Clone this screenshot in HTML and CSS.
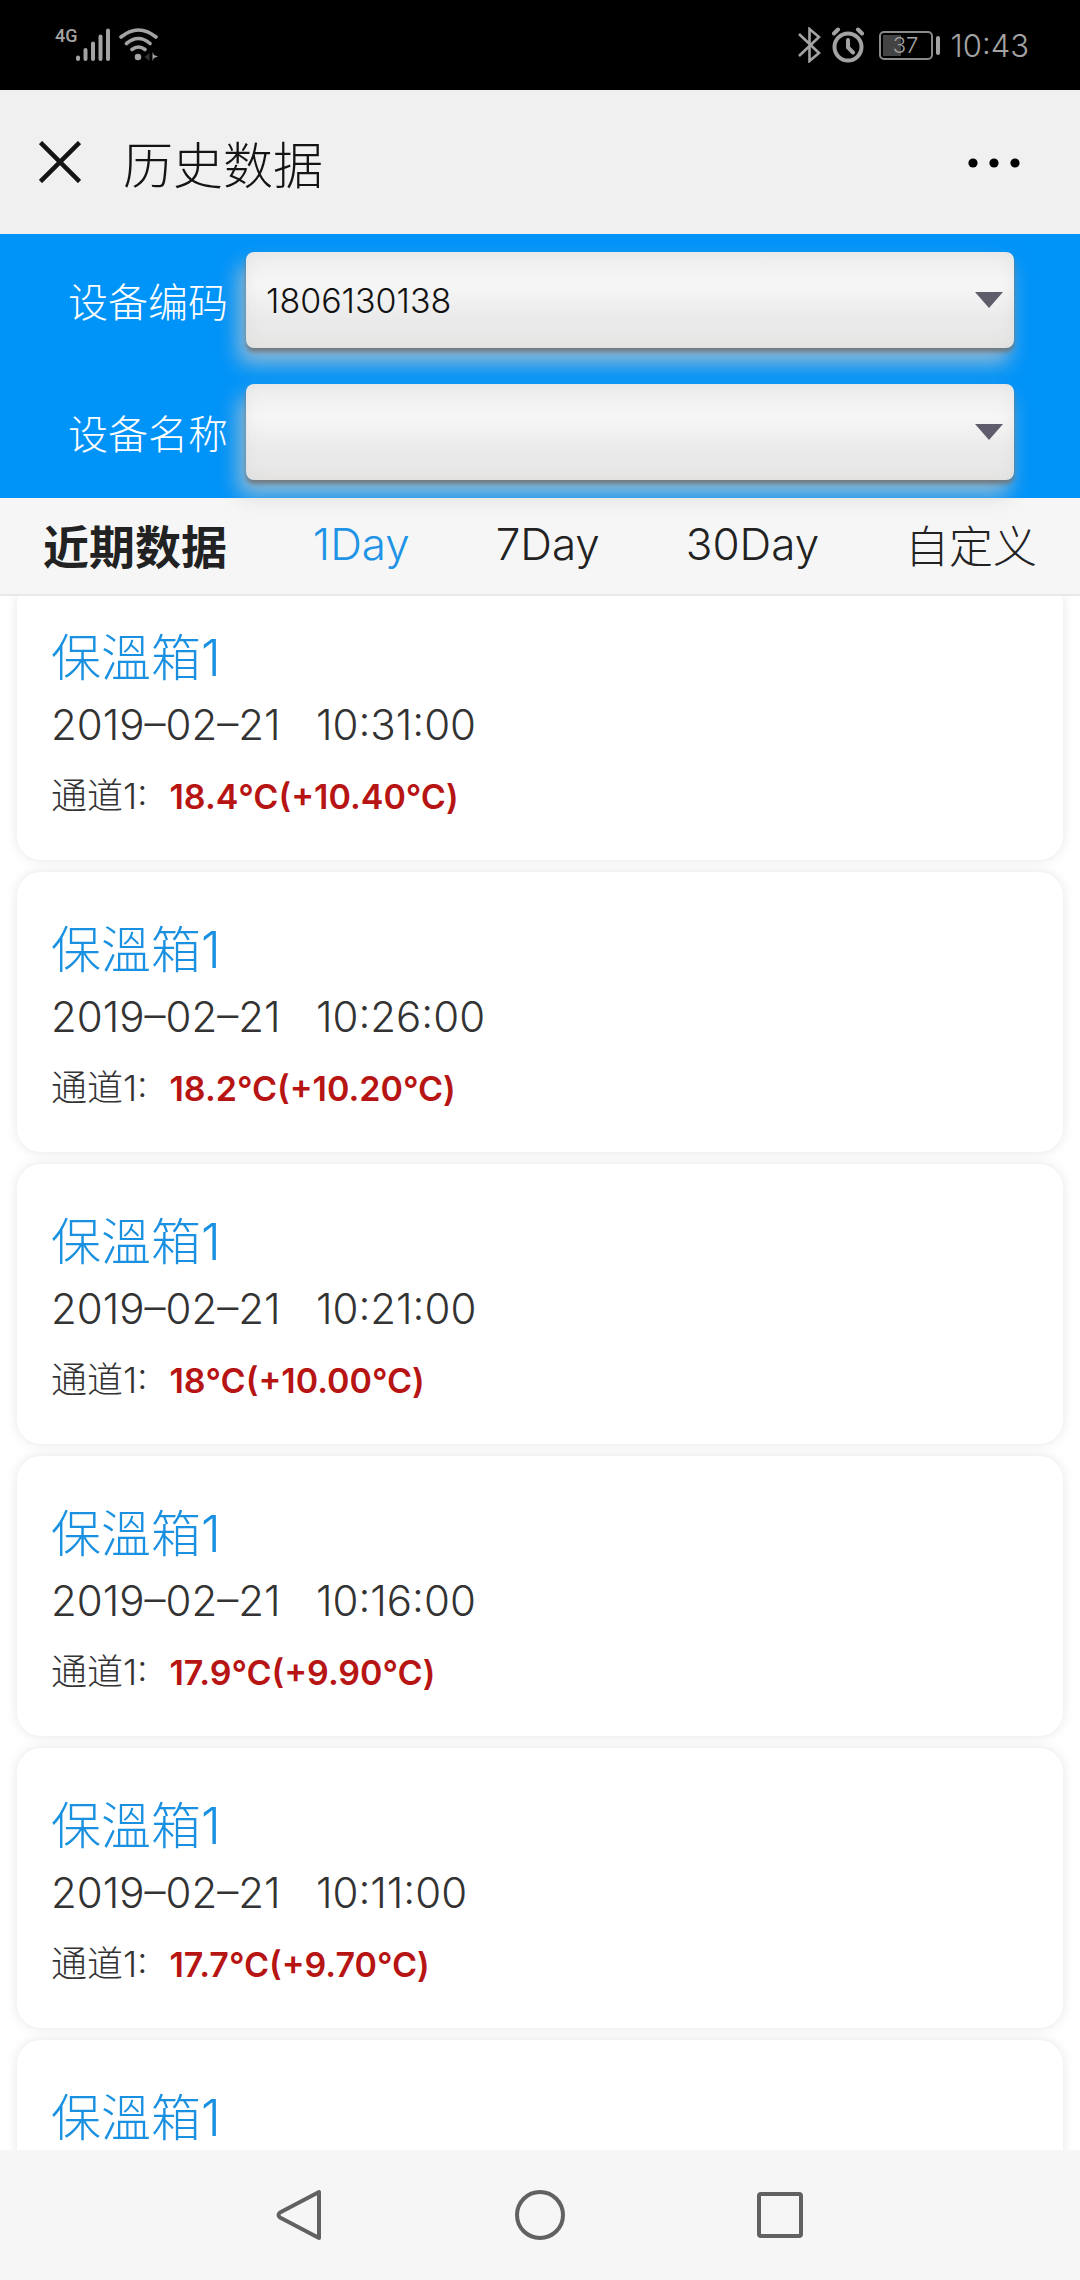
FILE: index.html
```html
<!DOCTYPE html>
<html lang="zh-CN">
<head>
    <meta charset="UTF-8">
    <meta name="viewport" content="width=device-width, initial-scale=1.0">
    <title>历史数据</title>
    <link rel="stylesheet" href="styles.css">
</head>
<body>
    <!-- 状态栏 -->
    <div class="status-bar">
        <div class="status-left">
            <span class="network">4G</span>
            <svg class="signal" width="36" height="34" viewBox="0 0 36 34" stroke="#a3a3a3" stroke-width="4" stroke-linecap="round">
                <path d="M3 29.500V31M10.500 22V31M18 15.500V31M25.500 8.500V31M33 2.500V31"/>
            </svg>
            <svg class="wifi" width="40" height="34" viewBox="0 0 40 34" fill="none" stroke="#a3a3a3" stroke-width="3.600" stroke-linecap="round">
                <path d="M2 9Q19.500 -5 37 9M7.500 15.500Q19.500 5.500 31 15.500M13 21.500Q19.500 16.500 26 21.500"/>
                <circle cx="19" cy="29" r="3.300" fill="#a3a3a3" stroke="none"/>
                <path d="M30.500 25v8l-5-4z" fill="#333" stroke="none"/>
                <path d="M33.500 24v9l1.500-3 4-1.500-4-1.500z" fill="#a3a3a3" stroke="none"/>
            </svg>
        </div>
        <div class="status-right">
            <svg width="24" height="36" viewBox="0 0 24 36" fill="none" stroke="#a3a3a3" stroke-width="2.600">
                <path d="M2 7L22 26L12.500 34V2L22 10L2 29"/>
            </svg>
            <svg width="34" height="36" viewBox="0 0 34 36" fill="none" stroke="#a3a3a3" stroke-width="4" stroke-linecap="round">
                <circle cx="17" cy="20" r="13.500"/>
                <path d="M17 13v7.500l5 5M3 6.500l4-4M27 2.500l4 4"/>
            </svg>
            <div class="battery"><span>37</span></div>
            <span class="clock">10:43</span>
        </div>
    </div>

    <!-- 标题栏 -->
    <header class="header">
        <button class="icon-button" type="button" aria-label="关闭">
            <svg width="42" height="42" viewBox="0 0 42 42" stroke="#141414" stroke-width="4.500">
                <path d="M1.500 1.500L40.500 40.500M40.500 1.500L1.500 40.500"/>
            </svg>
        </button>
        <h1>历史数据</h1>
        <button class="icon-button" type="button" aria-label="更多">
            <svg width="54" height="42" viewBox="0 0 54 42">
                <circle cx="6" cy="22" r="4.600"/>
                <circle cx="27" cy="22" r="4.600"/>
                <circle cx="48" cy="22" r="4.600"/>
            </svg>
        </button>
    </header>

    <!-- 设备选择 -->
    <form class="filter">
        <div class="field">
            <label for="deviceCode">设备编码</label>
            <select id="deviceCode">
                <option>1806130138</option>
            </select>
        </div>
        <div class="field">
            <label for="deviceName">设备名称</label>
            <select id="deviceName">
                <option></option>
            </select>
        </div>
    </form>

    <nav class="tabs">
        <strong>近期数据</strong>
        <button class="active" type="button">1Day</button>
        <button type="button">7Day</button>
        <button type="button">30Day</button>
        <button type="button">自定义</button>
    </nav>

    <!-- 数据列表 -->
    <main class="list">
        <section class="card">
            <h2>保溫箱1</h2>
            <p class="time">2019–02–21&nbsp;&nbsp; 10:31:00</p>
            <p class="channel">通道1: <b>18.4℃(+10.40℃)</b></p>
        </section>
        <section class="card">
            <h2>保溫箱1</h2>
            <p class="time">2019–02–21&nbsp;&nbsp; 10:26:00</p>
            <p class="channel">通道1: <b>18.2℃(+10.20℃)</b></p>
        </section>
        <section class="card">
            <h2>保溫箱1</h2>
            <p class="time">2019–02–21&nbsp;&nbsp; 10:21:00</p>
            <p class="channel">通道1: <b>18℃(+10.00℃)</b></p>
        </section>
        <section class="card">
            <h2>保溫箱1</h2>
            <p class="time">2019–02–21&nbsp;&nbsp; 10:16:00</p>
            <p class="channel">通道1: <b>17.9℃(+9.90℃)</b></p>
        </section>
        <section class="card">
            <h2>保溫箱1</h2>
            <p class="time">2019–02–21&nbsp;&nbsp; 10:11:00</p>
            <p class="channel">通道1: <b>17.7℃(+9.70℃)</b></p>
        </section>
        <section class="card">
            <h2>保溫箱1</h2>
        </section>
    </main>

    <!-- 系统导航键 -->
    <footer class="nav-keys">
        <button class="icon-button" type="button" aria-label="返回">
            <svg width="52" height="52" viewBox="0 0 52 52" fill="none" stroke="#616161" stroke-width="4" stroke-linejoin="round">
                <path d="M45 3V49L6 28.500Q3 26 6 23.500Z"/>
            </svg>
        </button>
        <button class="icon-button" type="button" aria-label="主页">
            <svg width="52" height="52" viewBox="0 0 52 52" fill="none" stroke="#616161" stroke-width="4">
                <circle cx="26" cy="26" r="23"/>
            </svg>
        </button>
        <button class="icon-button" type="button" aria-label="最近任务">
            <svg width="52" height="52" viewBox="0 0 52 52" fill="none" stroke="#616161" stroke-width="4">
                <rect x="5" y="5" width="42" height="42" rx="2"/>
            </svg>
        </button>
    </footer>
</body>
</html>
```
FILE: styles.css
```css
* {
    box-sizing: border-box;
}
body {
    font-family: Inter, "Noto Sans CJK SC", sans-serif;
    font-weight: 300;
    color: #222;
    background-color: #fff;
    margin: 0;
    height: 100vh;
    display: flex;
    flex-direction: column;
}
h1, h2, p {
    margin: 0;
    font-weight: 300;
}
button {
    font: inherit;
    color: inherit;
    background: none;
    border: none;
    padding: 0;
}
svg {
    display: block;
}

/* 状态栏 */
.status-bar {
    flex: none;
    height: 90px;
    padding: 0 51px 0 55px;
    background-color: #000;
    color: #a3a3a3;
    display: flex;
    align-items: center;
    justify-content: space-between;
}
.status-left, .status-right {
    display: flex;
    align-items: center;
}
.network {
    font-family: Roboto, sans-serif;
    font-size: 18px;
    font-weight: 500;
    line-height: 16px;
    align-self: flex-start;
}
.signal {
    margin-left: -3px;
}
.wifi {
    margin-left: 8px;
}
.status-right {
    gap: 10px;
}
.battery {
    width: 54px;
    height: 29px;
    margin: 0 8px 0 4px;
    border: 2px solid #8a8a8a;
    border-radius: 5px;
    background: linear-gradient(#444, #444) 2px 2px / 18px 21px no-repeat;
    font-size: 22px;
    line-height: 25px;
    text-align: center;
    position: relative;
}
.battery::after {
    content: "";
    position: absolute;
    top: 3px;
    right: -9px;
    width: 4px;
    height: 19px;
    border-radius: 2px;
    background-color: #a3a3a3;
}
.clock {
    font-size: 31px;
}

/* 标题栏 */
.header {
    flex: none;
    height: 144px;
    padding: 0 59px 0 39px;
    background-color: #f0f0f0;
    display: flex;
    align-items: center;
}
.header h1 {
    flex: 1;
    margin-left: 42px;
    padding-top: 8px;
    font-size: 50px;
    line-height: 72px;
    color: #141414;
}

/* 设备选择 */
.filter {
    flex: none;
    padding: 18px 66px 18px 68px;
    background-color: #0093f8;
    display: flex;
    flex-direction: column;
    gap: 36px;
    position: relative;
    z-index: 1;
}
.field {
    display: flex;
    align-items: center;
    gap: 18px;
}
.field label {
    font-size: 40px;
    color: #fff;
}
.field select {
    flex: 1;
    height: 96px;
    padding: 0 60px 0 20px;
    appearance: none;
    border: none;
    border-radius: 8px;
    font: inherit;
    font-size: 34px;
    color: #111;
    /* 下拉箭头 + 渐变 */
    background:
        url("data:image/svg+xml,%3Csvg xmlns='http://www.w3.org/2000/svg' viewBox='0 0 28 16'%3E%3Cpath d='M0 0h28L14 16z' fill='%235f5c6b'/%3E%3C/svg%3E") right 11px center / 28px 16px no-repeat,
        linear-gradient(#eee, #f6f6f6 35%, #eaeaea 70%, #e8e7e6);
    box-shadow:
        inset 0 0 16px rgba(200, 200, 200, 0.3),
        0 4px 4px rgba(110, 115, 120, 0.9),
        -6px 14px 20px 2px rgba(200, 200, 200, 0.7);
}

/* 时间范围 */
.tabs {
    flex: none;
    height: 98px;
    padding-bottom: 4px;
    background-color: #f6f6f6;
    border-bottom: 2px solid #e8e8e8;
    display: flex;
    align-items: center;
    justify-content: space-around;
    font-size: 44px;
}
.tabs strong {
    font-size: 46px;
    font-weight: 700;
}
.tabs .active {
    color: #1f93e6;
}

/* 数据列表 */
.list {
    flex: 1;
    min-height: 0;
    overflow: hidden;
    padding: 0 17px;
    display: flex;
    flex-direction: column;
    gap: 12px;
}
.card {
    flex: none;
    min-height: 280px;
    padding: 46px 34px 28px;
    border-radius: 24px;
    background-color: #fff;
    box-shadow: 0 0 12px rgba(0, 0, 0, 0.1);
}
.card:first-child {
    margin-top: -16px; /* 已向上滚动 */
}
.card h2 {
    font-size: 50px;
    line-height: 64px;
    color: #1a90e0;
}
.time {
    font-size: 42px;
    line-height: 70px;
    color: #333;
}
.channel {
    font-size: 36px;
    line-height: 72px;
    color: #333;
}
.channel b {
    margin-left: 12px;
    font-size: 34px;
    font-weight: 600;
    line-height: 1;
    color: #b71414;
}

/* 系统导航键 */
.nav-keys {
    flex: none;
    height: 130px;
    background-color: #f6f6f6;
    display: flex;
    align-items: center;
    justify-content: center;
    gap: 188px;
}
```
